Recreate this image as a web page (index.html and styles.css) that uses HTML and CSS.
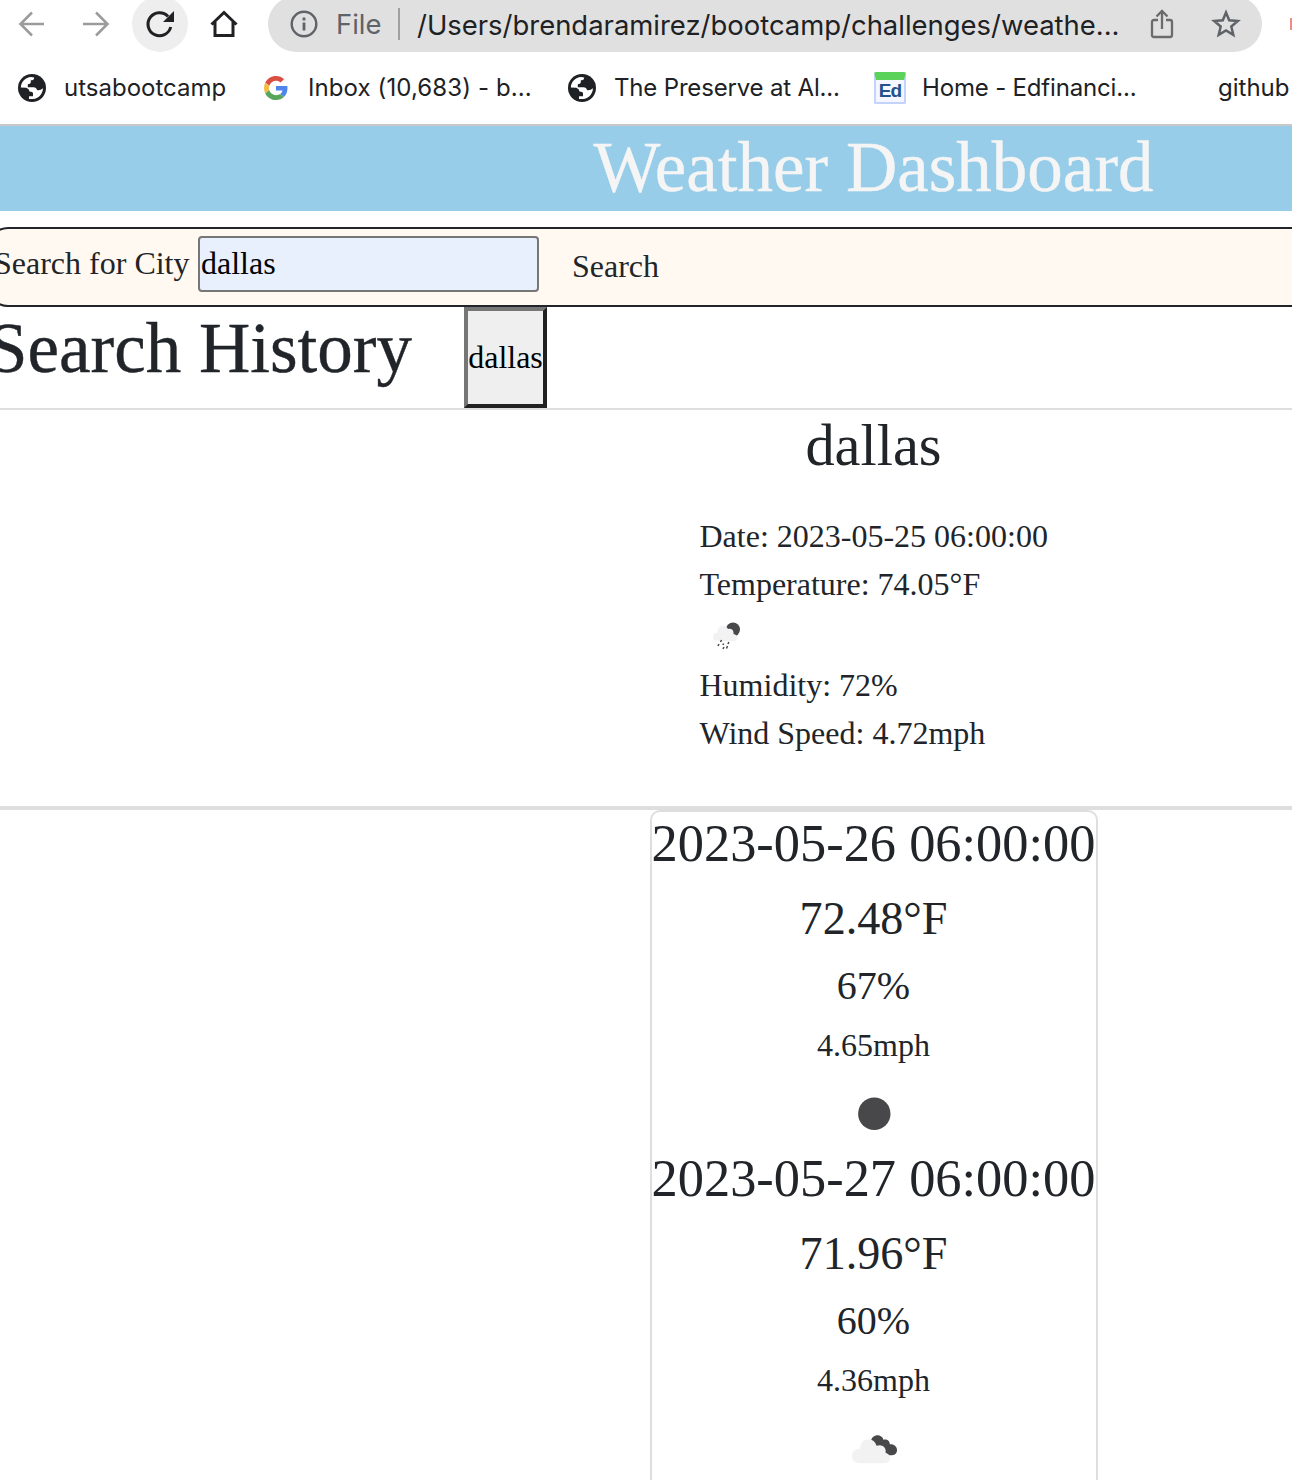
FILE: index.html
```html
<!DOCTYPE html>
<html lang="en">
<head>
<meta charset="utf-8">
<title>Weather Dashboard</title>
<link rel="stylesheet" href="styles.css">
</head>
<body>
<svg class="defs" width="0" height="0" aria-hidden="true">
  <symbol id="globe" viewBox="0 0 28 28">
    <circle cx="14" cy="14" r="14" fill="#202124"/>
    <path d="M2.800 13.500C3 8 7.500 3.200 13 3L16.200 3.400C16.200 5.500 15 6.200 12.800 6.300V8.500Q12.500 10 9.800 10.200V13.200H15.500Q18.600 13.400 19 16Q22 16.800 25 14.200C24.800 20 20.500 24.600 15 25H11V22.200H15V19.300Q14.800 17.800 11.500 17.600Q11.300 14.800 8.300 13.800Z" fill="#fff"/>
  </symbol>
</svg>
<header class="browser">
  <div class="toolbar">
    <svg class="nav-icon" viewBox="0 0 28 28"><path d="M26 14H3M14 2.500L2.500 14L14 25.500" fill="none" stroke="#9b9b9b" stroke-width="2.500"/></svg>
    <svg class="nav-icon forward" viewBox="0 0 28 28"><path d="M1 14H25M14 2.500L25.500 14L14 25.500" fill="none" stroke="#9b9b9b" stroke-width="2.500"/></svg>
    <div class="reload"><svg width="30" height="30" viewBox="0 0 30 30"><path d="M23 7.500A11.500 11.500 0 1 0 25.700 18" fill="none" stroke="#202124" stroke-width="3"/><path d="M29 2V13H18Z" fill="#202124"/></svg></div>
    <svg class="home" viewBox="0 0 28 28"><path d="M1.500 14.500L14 2.500L26.500 14.500M5 12V25.500H23V12" fill="none" stroke="#202124" stroke-width="3"/></svg>
    <div class="address">
      <svg width="28" height="28" viewBox="0 0 28 28"><circle cx="14" cy="14" r="12.300" fill="none" stroke="#5f6368" stroke-width="2.400"/><path d="M14 12.500V20.500M14 7.500V10.500" stroke="#5f6368" stroke-width="2.800"/></svg>
      <span class="scheme">File</span>
      <span class="divider"></span>
      <span class="url">/Users/brendaramirez/bootcamp/challenges/weathe...</span>
      <svg class="share" viewBox="0 0 24 30"><path d="M8 11H4Q2 11 2 13V26Q2 28 4 28H20Q22 28 22 26V13Q22 11 20 11H16M12 20V3M6.500 7.500L12 2L17.500 7.500" fill="none" stroke="#6b6b6b" stroke-width="2.300"/></svg>
      <svg class="star" viewBox="0 0 30 30"><path d="M15 3.500L18.200 11.300L26.800 12L20.300 17.500L22.300 25.800L15 21.400L7.700 25.800L9.700 17.500L3.200 12L11.800 11.300Z" fill="none" stroke="#5f6368" stroke-width="2.500"/></svg>
    </div>
    <span class="extension"></span>
  </div>
  <nav class="bookmarks">
    <a class="bookmark b-utsa"><svg width="28" height="28"><use href="#globe"/></svg><span>utsabootcamp</span></a>
    <a class="bookmark b-inbox"><svg width="24" height="24" viewBox="0 0 48 48"><path fill="#db4f43" d="M24 9.500c3.540 0 6.710 1.220 9.210 3.600l6.850-6.850C35.900 2.380 30.470 0 24 0 14.620 0 6.510 5.380 2.560 13.220l7.980 6.190C12.430 13.720 17.740 9.500 24 9.500z"/><path fill="#5086ec" d="M46.980 24.550c0-1.570-.15-3.090-.38-4.550H24v9.020h12.940c-.58 2.960-2.260 5.480-4.780 7.180l7.730 6c4.510-4.180 7.090-10.360 7.090-17.650z"/><path fill="#f2bd42" d="M10.530 28.590c-.48-1.450-.76-2.990-.76-4.590s.27-3.140.76-4.590l-7.980-6.190C.92 16.460 0 20.120 0 24c0 3.880.92 7.540 2.560 10.780l7.970-6.190z"/><path fill="#58a55c" d="M24 48c6.480 0 11.930-2.130 15.890-5.810l-7.730-6c-2.150 1.450-4.920 2.300-8.160 2.300-6.260 0-11.570-4.220-13.470-9.910l-7.980 6.190C6.510 42.620 14.620 48 24 48z"/></svg><span>Inbox (10,683) - b...</span></a>
    <a class="bookmark b-preserve"><svg width="28" height="28"><use href="#globe"/></svg><span>The Preserve at Al...</span></a>
    <a class="bookmark b-home"><span class="ed">Ed</span><span>Home - Edfinanci...</span></a>
    <a class="bookmark b-github"><span>github</span></a>
  </nav>
</header>
<main class="page">
  <h1 class="title">Weather Dashboard</h1>
  <form class="search">
    <label for="city">Search for City</label>
    <input id="city" type="text" value="dallas">
    <button class="search-btn" type="button">Search</button>
  </form>
  <section class="history">
    <h1>Search History</h1>
    <button class="city-btn" type="button">dallas</button>
  </section>
  <section class="today">
    <h2>dallas</h2>
    <ul>
      <li>Date: 2023-05-25 06:00:00</li>
      <li>Temperature: 74.05°F</li>
      <li class="icon-row"><svg width="53" height="53" viewBox="0 0 53 53"><circle cx="33" cy="21.500" r="7" fill="#48484a"/><path d="M17.500 33C11.500 33 11 25 17.500 24.500C17.500 17.500 25 15.500 28 21C32 19.500 34 23 33.500 26C38.500 27 38 33 34 33Z" fill="#f2f2f2"/><path d="M21.500 32L20.500 34M19 36L18 38M23.500 35.500L23 37M28.800 34L28 36M24 39L23 41M27.500 38L26.500 40.500" stroke="#48484a" stroke-width="1.500"/></svg></li>
      <li>Humidity: 72%</li>
      <li>Wind Speed: 4.72mph</li>
    </ul>
  </section>
  <section class="forecast">
    <article class="card">
      <h3>2023-05-26 06:00:00</h3>
      <h4>72.48°F</h4>
      <h5>67%</h5>
      <h6>4.65mph</h6>
      <svg class="sky" viewBox="0 0 100 67"><circle cx="50.300" cy="34" r="16.300" fill="#48484a"/></svg>
      <h3>2023-05-27 06:00:00</h3>
      <h4>71.96°F</h4>
      <h5>60%</h5>
      <h6>4.36mph</h6>
      <svg class="sky" viewBox="0 0 100 67"><path d="M47 27C47 19 58 18 59.500 25C63 23.500 66 26 66 29.500C75 29 75.500 40.500 68 40.500C63 41 61 38 60 35L50 30Z" fill="#48484a"/><path d="M36 48.500C25 48.500 25.500 34 36 34C36 23 49.500 21 52.500 31C59 28.500 63 34 61.500 38C68 39.500 68 48.500 61 48.500Z" fill="#f2f2f2"/></svg>
    </article>
  </section>
</main>
</body>
</html>
```
FILE: styles.css
```css
* { box-sizing: border-box; }
html, body { height: 1480px; overflow: hidden; }
body { margin: 0; background: #fff; color: #212529; font: 32px/1.5 "Liberation Serif", serif; }
.defs { display: none; }
svg { flex: none; }

.browser { height: 126px; border-bottom: 2px solid #c9c9c9; font-family: Inter, sans-serif; color: #202124; overflow: hidden; }
.toolbar { display: flex; align-items: center; height: 56px; margin-top: -4px; padding-left: 18px; }
.nav-icon { width: 28px; height: 28px; }
.forward { margin-left: 36px; }
.reload { display: flex; align-items: center; justify-content: center; flex: none; width: 56px; height: 56px; margin-left: 22px; border-radius: 50%; background: #eee; }
.home { width: 28px; height: 28px; margin-left: 22px; }
.address { display: flex; align-items: center; flex: none; width: 994px; height: 56px; margin-left: 30px; padding-left: 22px; border-radius: 28px; background: #e0e0e0; font-size: 27.45px; line-height: 56px; white-space: nowrap; }
.scheme { width: 62px; margin-left: 18px; color: #5f6368; }
.divider { width: 2px; height: 32px; background: #a0a0a0; }
.url { width: 733px; margin-left: 17px; padding-top: 1px; }
.share { width: 24px; height: 30px; }
.star { width: 30px; height: 30px; margin-left: 37px; }
.extension { flex: none; width: 12px; height: 12px; margin-left: 28px; background: #f28b82; }
.bookmarks { display: flex; height: 72px; font-size: 24px; line-height: 72px; white-space: nowrap; padding-left: 18px; }
.bookmark { display: flex; align-items: center; flex: none; }
.b-utsa { width: 246px; gap: 18px; }
.b-inbox { width: 304px; gap: 20px; letter-spacing: 0.1px; }
.b-preserve { width: 306px; gap: 18px; letter-spacing: -0.17px; }
.b-home { width: 344px; gap: 16px; letter-spacing: -0.17px; }
.ed { width: 32px; height: 32px; border: 2px solid #c4d3fa; border-top: 8px solid #5bd35b; border-radius: 2px; background: #f4f7ff; color: #24508c; font: bold 19px/21px "Liberation Sans", sans-serif; letter-spacing: -1px; text-align: center; }

.page { width: 1771px; margin-left: -12px; }
h1, h2, h3, h4, h5, h6 { margin: 0 0 16px; font-weight: 400; line-height: 1.2; }
h1 { font-size: 71px; line-height: 83px; -webkit-text-stroke: 0.4px currentColor; }
h2 { font-size: 58.36px; line-height: 72px; margin-bottom: 14px; }
h3 { font-size: 52.4px; line-height: 62.7px; }
h4 { font-size: 46.12px; }
h5 { font-size: 40px; }
h6 { font-size: 32px; }
.title { height: 85px; background: #97cde9; color: #f5f5f5; text-align: center; }
.search { display: flex; align-items: flex-start; height: 80px; padding: 7px 0 0 4px; border: 2px solid #212529; border-radius: 20px; background: #fff9f1; }
.search label { width: 204px; padding-top: 3px; white-space: nowrap; }
.search input { width: 341px; height: 56px; padding: 0 1px 1px; border: 2px solid #767676; border-radius: 4px; background: #e8f0fe; color: #000; font: inherit; }
.search-btn { height: 60px; margin-left: 8px; padding: 0 25px; border: 0; background: none; color: inherit; font: inherit; }
.history { display: flex; height: 103px; border-bottom: 2px solid #dedede; }
.history h1 { width: 476px; }
.city-btn { width: 83px; height: 101px; padding: 0 0 1px; border: 4px solid; border-color: #767676 #212121 #212121 #767676; background: #efefef; color: #000; font: inherit; }
.today { display: flex; flex-direction: column; align-items: center; height: 400px; border-bottom: 4px solid #dedede; }
.today ul { width: 348px; margin: 16px 0 0; padding: 0; list-style: none; white-space: nowrap; }
.icon-row { height: 53px; line-height: 0; }
.forecast { display: flex; justify-content: center; }
.card { display: flex; flex-direction: column; align-items: center; width: 448px; height: 690px; border: 2px solid #dedede; border-bottom: 0; border-radius: 10px 10px 0 0; white-space: nowrap; }
.sky { width: 100px; height: 66.600px; }
```
